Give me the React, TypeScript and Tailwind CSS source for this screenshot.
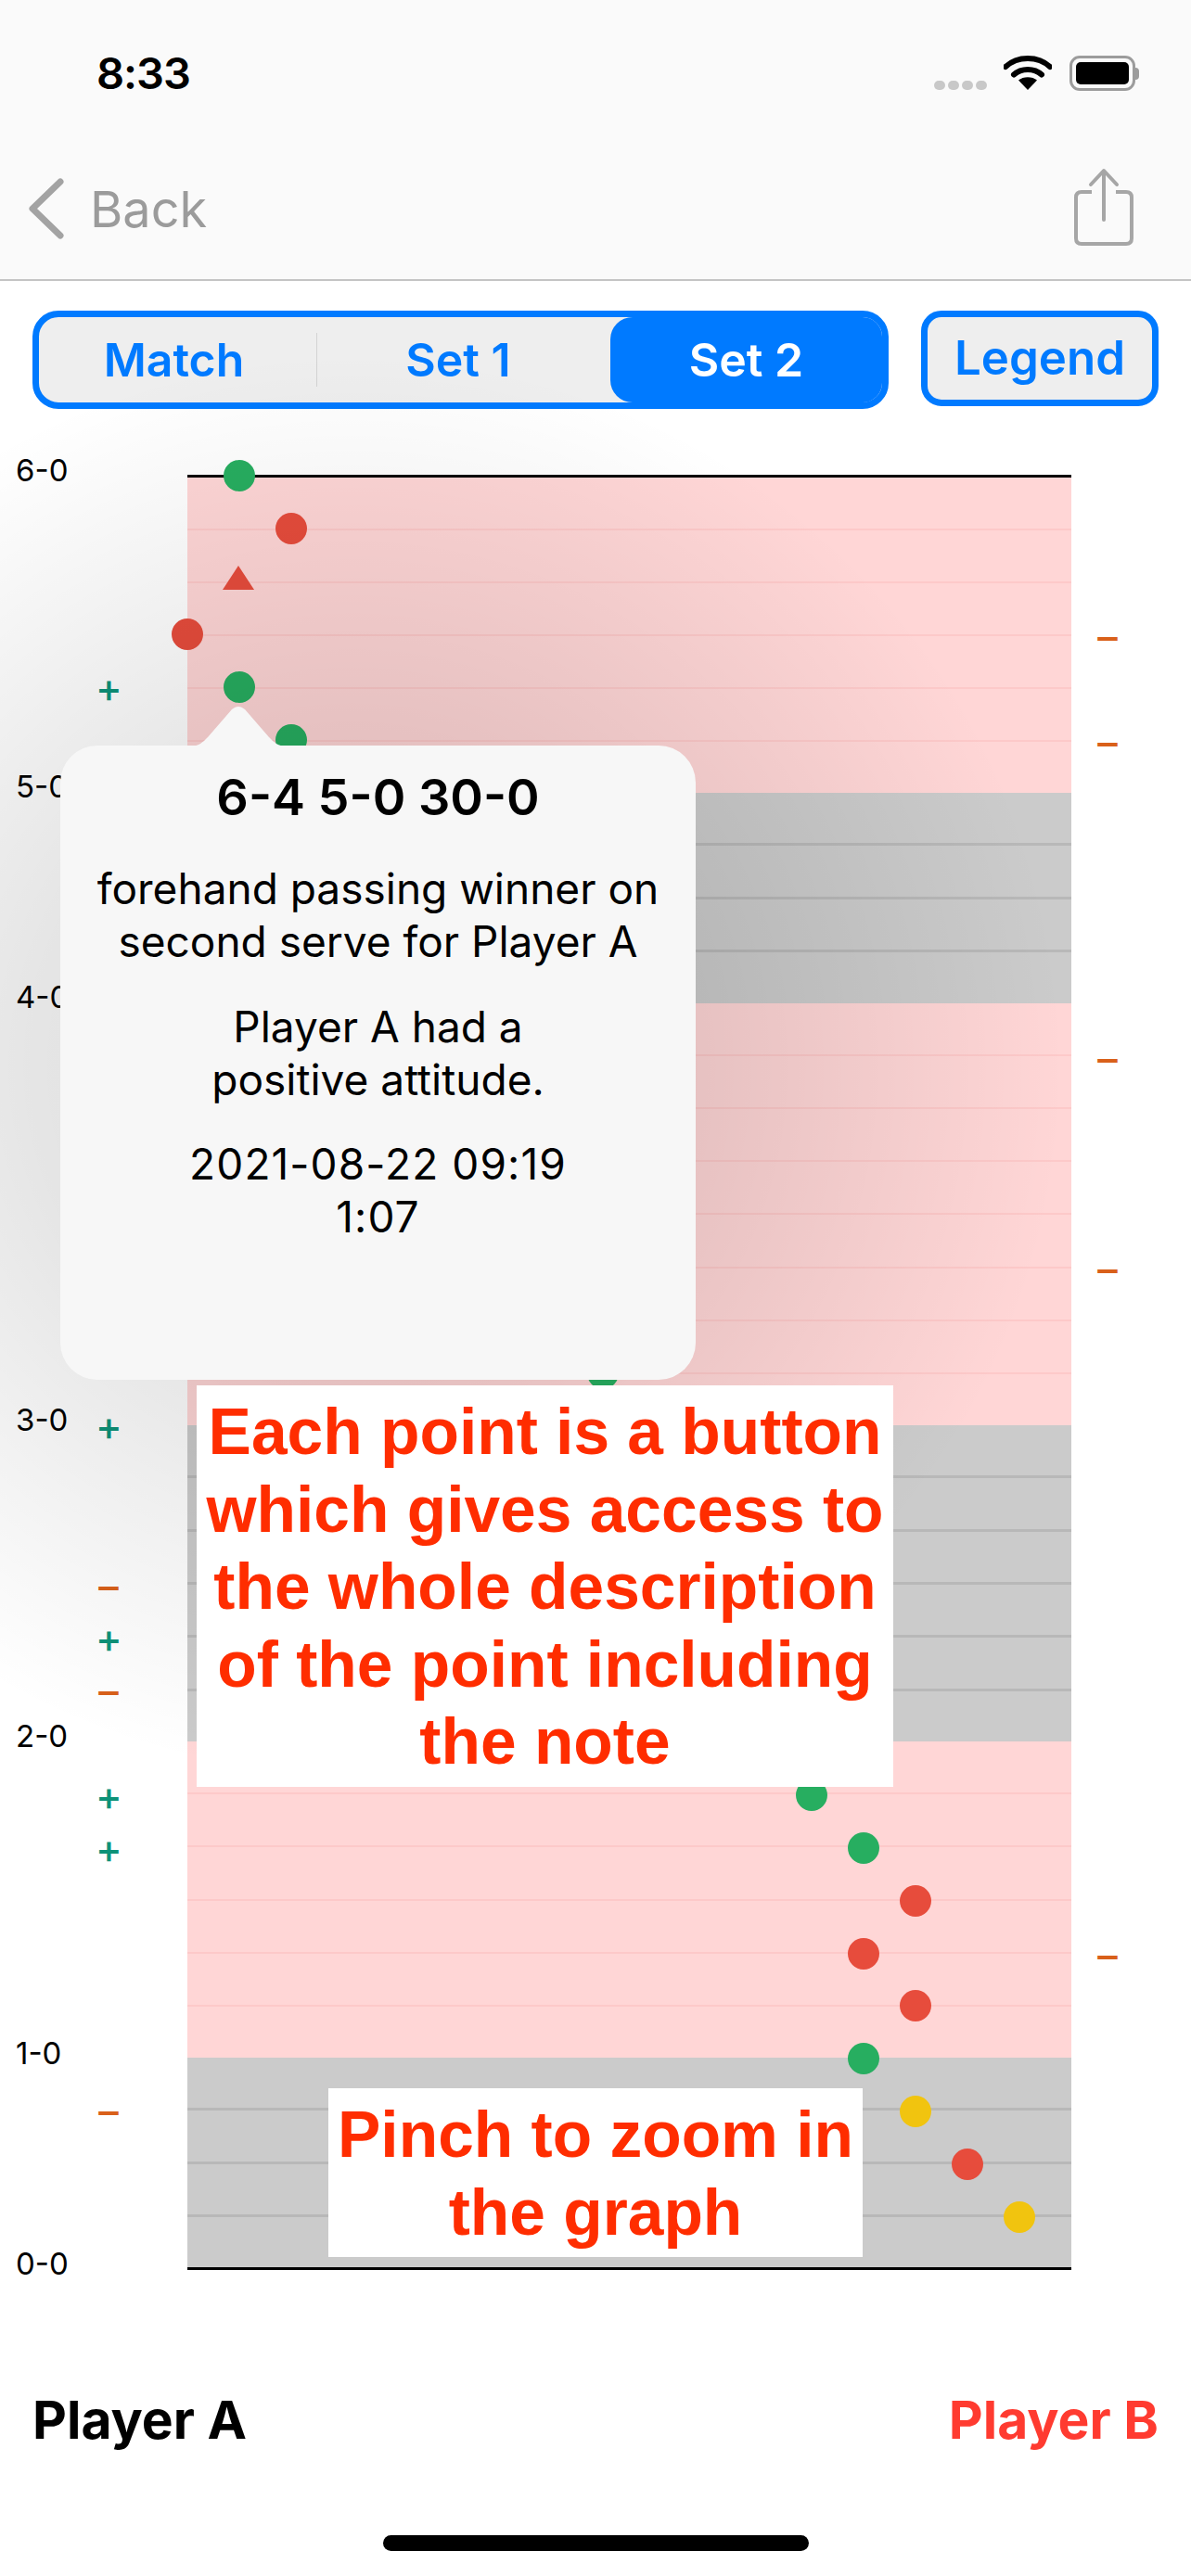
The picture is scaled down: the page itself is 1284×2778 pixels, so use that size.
const STEP = 1935 / 34;
const COL = 953 / 17;

const bands = [
  { rows: 6, kind: "pink" },
  { rows: 4, kind: "gray" },
  { rows: 8, kind: "pink" },
  { rows: 6, kind: "gray" },
  { rows: 6, kind: "pink" },
  { rows: 4, kind: "gray" },
];

type Dot = { col: number; n: number; color: string };
const GREEN = "#27ae60";
const RED = "#e74c3c";
const YELLOW = "#f1c40f";

const dots: Dot[] = [
  { col: 1, n: 34, color: GREEN },
  { col: 2, n: 33, color: RED },
  { col: 0, n: 31, color: RED },
  { col: 1, n: 30, color: GREEN },
  { col: 2, n: 29, color: GREEN },
  { col: 8, n: 17, color: GREEN },
  { col: 12, n: 9, color: GREEN },
  { col: 13, n: 8, color: GREEN },
  { col: 14, n: 7, color: RED },
  { col: 13, n: 6, color: RED },
  { col: 14, n: 5, color: RED },
  { col: 13, n: 4, color: GREEN },
  { col: 14, n: 3, color: YELLOW },
  { col: 15, n: 2, color: RED },
  { col: 16, n: 1, color: YELLOW },
];

const axis = [
  { label: "6-0", y: 507 },
  { label: "5-0", y: 848 },
  { label: "4-0", y: 1075 },
  { label: "3-0", y: 1531 },
  { label: "2-0", y: 1872 },
  { label: "1-0", y: 2214 },
  { label: "0-0", y: 2441 },
];

const leftMarks = [
  { s: "+", y: 742 },
  { s: "+", y: 1538 },
  { s: "–", y: 1711 },
  { s: "+", y: 1767 },
  { s: "–", y: 1824 },
  { s: "+", y: 1937 },
  { s: "+", y: 1994 },
  { s: "–", y: 2277 },
];
const rightMarks = [687, 801, 1142, 1369, 2109];

const TOP = 512;

const App = () => {
  return (
    <div className="relative w-[1284px] h-[2778px] overflow-hidden bg-white font-['Inter',sans-serif] text-black">
      {/* Status + nav bar */}
      <div className="relative h-[303px] bg-[#fafafa] border-b-2 border-[#c4c4c4]">
        <span className="absolute left-[104px] top-[52px] text-[47px] leading-[54px] font-semibold tracking-[-1px]">8:33</span>
        <div className="absolute left-[1007px] top-[87px] flex gap-[3px]">
          <span className="w-[12px] h-[10px] rounded-full bg-[#c8c8c8]" />
          <span className="w-[12px] h-[10px] rounded-full bg-[#c8c8c8]" />
          <span className="w-[12px] h-[10px] rounded-full bg-[#c8c8c8]" />
          <span className="w-[12px] h-[10px] rounded-full bg-[#c8c8c8]" />
        </div>
        <svg className="absolute left-[1082px] top-[59px]" width="52" height="38" viewBox="0 0 52 38">
          <path d="M2 13 C15 1 37 1 50 13" fill="none" stroke="#000" strokeWidth="6" strokeLinecap="round" />
          <path d="M11 21.5 C19 14 33 14 41 21.5" fill="none" stroke="#000" strokeWidth="6" strokeLinecap="round" />
          <path d="M26 38 L16 27.5 C21 23 31 23 36 27.5 Z" fill="#000" />
        </svg>
        <div className="absolute left-[1153px] top-[60px] flex items-center">
          <div className="w-[71px] h-[38px] rounded-[11px] border-[3px] border-[#9c9c9c] p-[4px]">
            <div className="w-full h-full rounded-[5px] bg-black" />
          </div>
          <div className="w-[4px] h-[13px] rounded-r-full bg-[#9c9c9c]" />
        </div>
        <svg className="absolute left-[29px] top-[191px]" width="42" height="68" viewBox="0 0 42 68">
          <path d="M36 5 L6 34 L36 63" fill="none" stroke="#a3a3a3" strokeWidth="7" strokeLinecap="round" strokeLinejoin="round" />
        </svg>
        <span className="absolute left-[97px] top-[193px] text-[54px] leading-[66px] text-[#9b9b9b]">Back</span>
        <svg className="absolute left-[1156px] top-[181px]" width="68" height="86" viewBox="0 0 68 86">
          <path d="M21 26 H10 Q4 26 4 32 V76 Q4 82 10 82 H58 Q64 82 64 76 V32 Q64 26 58 26 H47" fill="none" stroke="#a6a6a6" strokeWidth="4" />
          <path d="M34 56 V4 M20 18 L34 3 L48 18" fill="none" stroke="#a6a6a6" strokeWidth="4" strokeLinecap="round" strokeLinejoin="round" />
        </svg>
      </div>

      {/* Segment control + legend */}
      <div className="flex items-start pl-[35px] pt-[32px] gap-[35px]">
        <div className="relative flex w-[923px] h-[106px] rounded-[28px] border-[7px] border-[#007aff] bg-[#eeeeee] overflow-hidden text-[#007aff] text-[50px] font-semibold leading-none">
          <div className="w-[299px] flex items-center justify-center pr-[8px]">Match</div>
          <div className="w-[1px] h-[58px] self-center bg-[#d3d3d3]" />
          <div className="w-[316px] flex items-center justify-center pr-[12px]">Set 1</div>
          <div className="flex-1 flex items-center justify-center bg-[#007aff] text-white rounded-l-[24px]">Set 2</div>
        </div>
        <div className="flex w-[256px] h-[103px] items-center justify-center rounded-[22px] border-[7px] border-[#007aff] bg-[#eeeeee] text-[#007aff] text-[51px] font-semibold leading-none pb-[2px]">
          Legend
        </div>
      </div>

      {/* Chart */}
      <div className="relative mt-[71px] h-[1936px]">
        <div className="ml-[202px] w-[953px] h-[1936px] flex flex-col border-y-[3px] border-black box-border">
          {bands.map((b, i) => (
            <div key={i} className={b.kind === "pink" ? "bg-[#ffd6d6]" : "bg-[#cbcbcb]"} style={{ height: b.rows * STEP - (i === 0 || i === 5 ? 1.5 : 0) }}>
              <div className="flex flex-col h-full">
                {Array.from({ length: b.rows }).map((_, r) => (
                  <div key={r} className={r === 0 ? "flex-1" : b.kind === "pink" ? "flex-1 border-t-2 border-[#fdc9c9]" : "flex-1 border-t-[3px] border-[#b8b8b8]"} />
                ))}
              </div>
            </div>
          ))}
        </div>

        {dots.map((d, i) => (
          <div
            key={i}
            className="absolute w-[34px] h-[34px] rounded-full"
            style={{ left: d.col * COL - 17 + 202, top: 1935 - d.n * STEP - 16, backgroundColor: d.color }}
          />
        ))}
        <svg className="absolute left-[239px] top-[97px]" width="36" height="28" viewBox="0 0 36 28">
          <path d="M18 1 L35 27 H1 Z" fill={RED} />
        </svg>

        {axis.map((a) => (
          <span key={a.label} className="absolute left-[17px] text-[33px] leading-[36px]" style={{ top: a.y - TOP - 18 }}>
            {a.label}
          </span>
        ))}
        {leftMarks.map((m, i) => (
          <span
            key={i}
            className={m.s === "+" ? "absolute left-[103px] w-[28px] text-center text-[43px] font-medium leading-[42px] text-[#0d9278]" : "absolute left-[103px] w-[28px] text-center text-[43px] font-medium leading-[42px] text-[#d9601a]"}
            style={{ top: m.y - TOP - 22 }}
          >
            {m.s}
          </span>
        ))}
        {rightMarks.map((y) => (
          <span key={y} className="absolute left-[1180px] w-[28px] text-center text-[43px] font-medium leading-[42px] text-[#d9601a]" style={{ top: y - TOP - 22 }}>
            –
          </span>
        ))}
      </div>

      {/* Players */}
      <div className="flex justify-between px-[35px] pt-[129px] text-[57px] leading-[66px] font-bold">
        <span>Player A</span>
        <span className="text-[#ff3b30]">Player B</span>
      </div>

      {/* Dim behind the popover */}
      <div className="absolute inset-0 bg-[radial-gradient(circle_770px_at_380px_1150px,rgba(0,0,0,0.14),rgba(0,0,0,0.1)_45%,rgba(0,0,0,0)_100%)]" />

      {/* Popover */}
      <div className="absolute left-[65px] top-[760px] w-[685px]">
        <svg className="block ml-[138px]" width="108" height="45" viewBox="0 0 108 45">
          <path d="M0 45 C12 45 16 40 21 35 L47 5 Q54 -1 61 5 L87 35 C92 40 96 45 108 45 Z" fill="#f7f7f7" />
        </svg>
        <div className="h-[684px] -mt-px rounded-[40px] bg-[#f7f7f7] flex flex-col items-center text-center text-[46px] leading-[57px] pt-[26px]">
          <p className="font-semibold text-[54px] leading-[60px] mb-[40px]">6-4 5-0 30-0</p>
          <p className="mb-[35px]">forehand passing winner on<br />second serve for Player A</p>
          <p className="mb-[34px]">Player A had a<br />positive attitude.</p>
          <p className="tracking-[1.1px]">2021-08-22 09:19<br />1:07</p>
        </div>
      </div>

      {/* Annotations */}
      <div className="absolute left-[212px] top-[1494px] w-[751px] h-[433px] bg-white flex items-center justify-center text-center text-[#ff2d00] font-['Liberation_Sans',sans-serif] font-bold text-[69.5px] leading-[83.5px] pt-[3px]">
        <p>Each point is a button<br />which gives access to<br />the whole description<br />of the point including<br />the note</p>
      </div>
      <div className="absolute left-[354px] top-[2252px] w-[576px] h-[182px] bg-white flex items-center justify-center text-center text-[#ff2d00] font-['Liberation_Sans',sans-serif] font-bold text-[69.5px] leading-[83.5px] pt-[3px]">
        <p>Pinch to zoom in<br />the graph</p>
      </div>

      {/* Home indicator */}
      <div className="absolute left-[413px] top-[2734px] w-[459px] h-[17px] rounded-full bg-black" />
    </div>
  );
};

export default App;
